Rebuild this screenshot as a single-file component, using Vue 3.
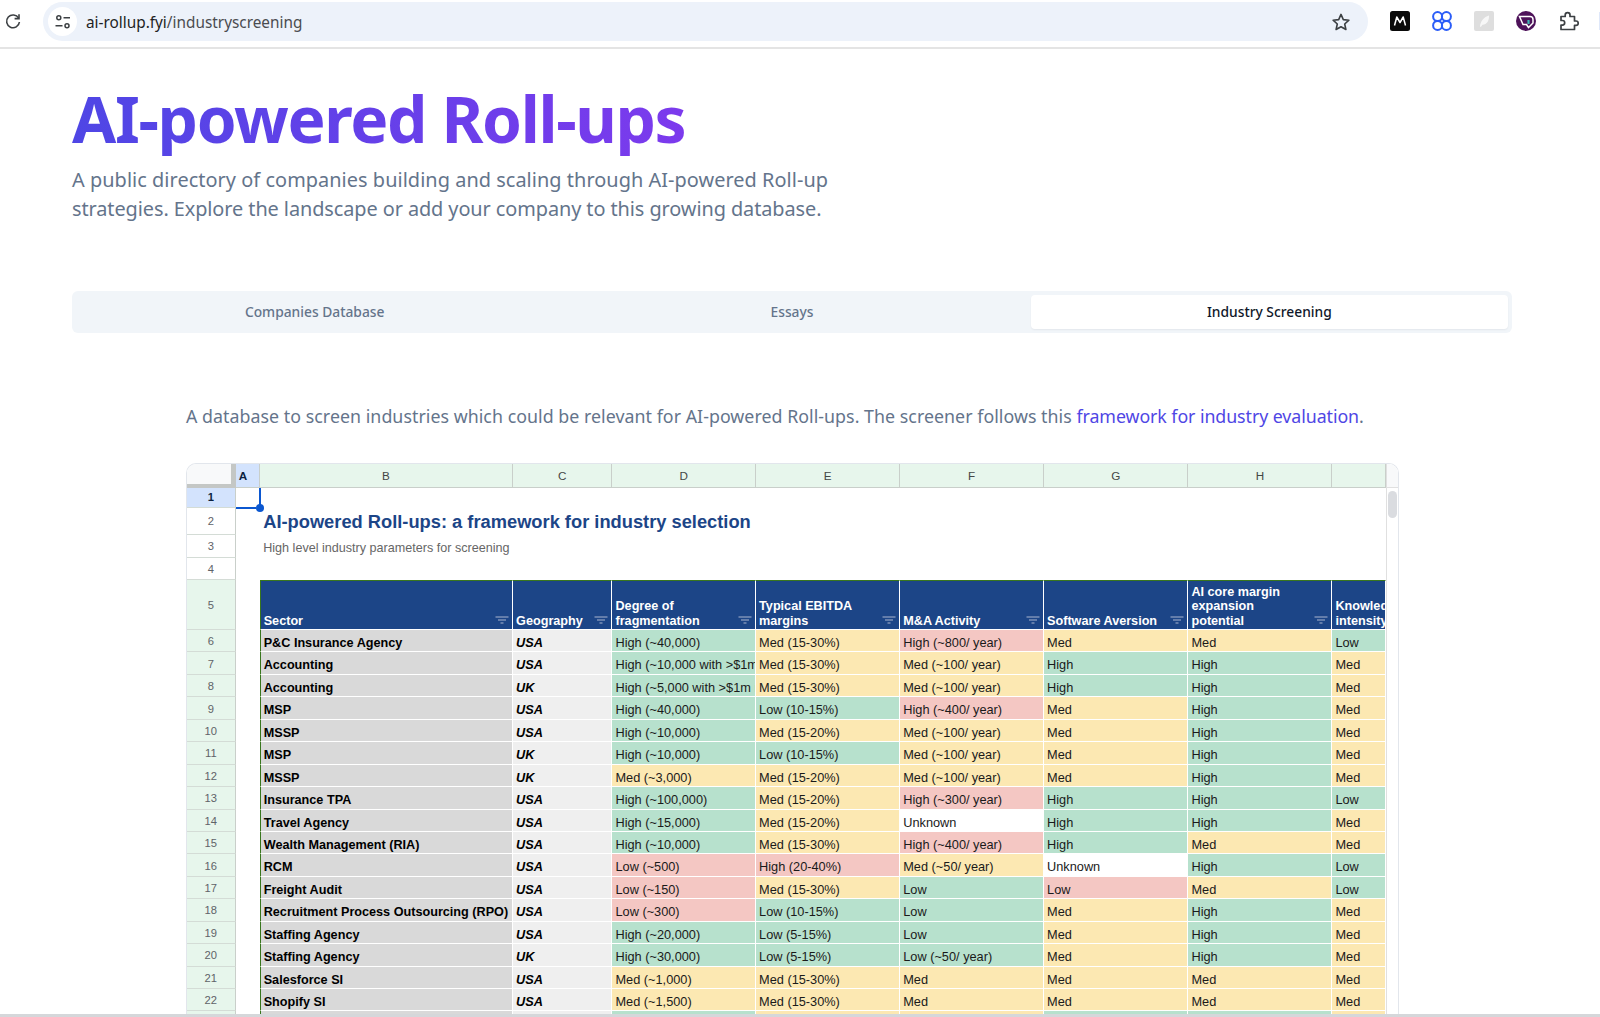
<script setup>
const colHeads = [
  { l: 'A', sel: true }, { l: 'B' }, { l: 'C' }, { l: 'D' }, { l: 'E' }, { l: 'F' }, { l: 'G' }, { l: 'H' }, { l: '' }
]
const heads = [
  { t: 'Sector', f: true }, { t: 'Geography', f: true },
  { t: 'Degree of\nfragmentation', f: true }, { t: 'Typical EBITDA\nmargins', f: true },
  { t: 'M&A Activity', f: true }, { t: 'Software Aversion', f: true },
  { t: 'AI core margin\nexpansion\npotential', f: true }, { t: 'Knowledge\nintensity', f: false }
]
const raw = [
  ['P&C Insurance Agency', 'USA', 'High (~40,000)|g', 'Med (15-30%)|y', 'High (~800/ year)|r', 'Med|y', 'Med|y', 'Low|g'],
  ['Accounting', 'USA', 'High (~10,000 with >$1m revenue)|g', 'Med (15-30%)|y', 'Med (~100/ year)|y', 'High|g', 'High|g', 'Med|y'],
  ['Accounting', 'UK', 'High (~5,000 with >$1m revenue)|g', 'Med (15-30%)|y', 'Med (~100/ year)|y', 'High|g', 'High|g', 'Med|y'],
  ['MSP', 'USA', 'High (~40,000)|g', 'Low (10-15%)|g', 'High (~400/ year)|r', 'Med|y', 'High|g', 'Med|y'],
  ['MSSP', 'USA', 'High (~10,000)|g', 'Med (15-20%)|y', 'Med (~100/ year)|y', 'Med|y', 'High|g', 'Med|y'],
  ['MSP', 'UK', 'High (~10,000)|g', 'Low (10-15%)|g', 'Med (~100/ year)|y', 'Med|y', 'High|g', 'Med|y'],
  ['MSSP', 'UK', 'Med (~3,000)|y', 'Med (15-20%)|y', 'Med (~100/ year)|y', 'Med|y', 'High|g', 'Med|y'],
  ['Insurance TPA', 'USA', 'High (~100,000)|g', 'Med (15-20%)|y', 'High (~300/ year)|r', 'High|g', 'High|g', 'Low|g'],
  ['Travel Agency', 'USA', 'High (~15,000)|g', 'Med (15-20%)|y', 'Unknown|w', 'High|g', 'High|g', 'Med|y'],
  ['Wealth Management (RIA)', 'USA', 'High (~10,000)|g', 'Med (15-30%)|y', 'High (~400/ year)|r', 'High|g', 'Med|y', 'Med|y'],
  ['RCM', 'USA', 'Low (~500)|r', 'High (20-40%)|r', 'Med (~50/ year)|y', 'Unknown|w', 'High|g', 'Low|g'],
  ['Freight Audit', 'USA', 'Low (~150)|r', 'Med (15-30%)|y', 'Low|g', 'Low|r', 'Med|y', 'Low|g'],
  ['Recruitment Process Outsourcing (RPO)', 'USA', 'Low (~300)|r', 'Low (10-15%)|g', 'Low|g', 'Med|y', 'High|g', 'Med|y'],
  ['Staffing Agency', 'USA', 'High (~20,000)|g', 'Low (5-15%)|g', 'Low|g', 'Med|y', 'High|g', 'Med|y'],
  ['Staffing Agency', 'UK', 'High (~30,000)|g', 'Low (5-15%)|g', 'Low (~50/ year)|g', 'Med|y', 'High|g', 'Med|y'],
  ['Salesforce SI', 'USA', 'Med (~1,000)|y', 'Med (15-30%)|y', 'Med|y', 'Med|y', 'Med|y', 'Med|y'],
  ['Shopify SI', 'USA', 'Med (~1,500)|y', 'Med (15-30%)|y', 'Med|y', 'Med|y', 'Med|y', 'Med|y'],
  ['', '', '|g', '|y', '|y', '|g', '|g', '|y']
]
const rows = raw.map((r, i) => ({
  n: i + 6,
  sector: r[0],
  geo: r[1],
  cells: r.slice(2).map(c => {
    const [t, k] = c.split('|')
    return { t, k }
  })
}))
</script>

<template>
  <div class="page">
    <header class="bar">
      <svg class="reload" width="18" height="18" viewBox="0 0 18 18" fill="none" stroke="#3c4043" stroke-width="1.6">
        <path d="M14.6 6.2A6.4 6.4 0 1 0 15.4 10" />
        <path d="M15 2.2v4.4h-4.4" stroke-linejoin="miter" />
      </svg>
      <div class="pill">
        <span class="tune">
          <svg width="18" height="18" viewBox="0 0 18 18" fill="none" stroke="#3c4043" stroke-width="1.5">
            <circle cx="4.8" cy="4.8" r="2" />
            <path d="M9.5 4.8h6.5M1.5 12.8h7" />
            <circle cx="13" cy="12.8" r="2" />
          </svg>
        </span>
        <span class="url">ai-rollup.fyi<span class="path">/industryscreening</span></span>
        <svg class="star" width="20" height="20" viewBox="0 0 20 20" fill="none" stroke="#3c4043" stroke-width="1.6" stroke-linejoin="round">
          <path d="M10 2.4l2.3 5.2 5.6.6-4.2 3.8 1.2 5.5L10 14.7l-4.9 2.8 1.2-5.5-4.2-3.8 5.6-.6z" />
        </svg>
      </div>
      <div class="exts">
        <svg width="20" height="20" viewBox="0 0 20 20">
          <rect width="20" height="20" rx="2.5" fill="#0a0a0a" />
          <path d="M4.5 14.5 6.8 6 10 11.5 13.2 6 15.5 14.5" fill="none" stroke="#fff" stroke-width="1.5" stroke-linejoin="round" />
        </svg>
        <svg width="20" height="20" viewBox="0 0 20 20" fill="none" stroke="#2a5cf8" stroke-width="2">
          <circle cx="5.6" cy="5.6" r="4.5" />
          <circle cx="14.4" cy="5.6" r="4.5" />
          <circle cx="5.6" cy="14.4" r="4.5" />
          <circle cx="14.4" cy="14.4" r="4.5" />
        </svg>
        <svg width="20" height="20" viewBox="0 0 20 20">
          <rect width="20" height="20" rx="2" fill="#dedede" />
          <path d="M6 15.5C6.5 10 10 6 15 4.5c.3 5-2 9-6.5 9.3L6.8 16z" fill="#f7f7f7" />
        </svg>
        <svg width="20" height="20" viewBox="0 0 20 20">
          <circle cx="10" cy="10" r="10" fill="#4d1259" />
          <path d="M3.5 5.5h10.5a3 3 0 0 1 3 3v3.5l-4.5 4.5-2-3H7z" fill="none" stroke="#fff" stroke-width="1.5" />
          <path d="M12.5 9v4" stroke="#3fb6b2" stroke-width="2.2" />
        </svg>
        <svg width="22" height="22" viewBox="0 0 22 22" fill="none" stroke="#3c4043" stroke-width="1.7" stroke-linejoin="round">
          <path d="M3 6.5h4.2V5a2.4 2.4 0 0 1 4.8 0v1.5h4.5V11H18a2.2 2.2 0 0 1 0 4.4h-1.5V19.5H3v-4.4h1.4a2.3 2.3 0 0 0 0-4.6H3z" />
        </svg>
        <span class="sliver"></span>
      </div>
    </header>

    <main class="content">
      <h1 class="title">AI-powered Roll-ups</h1>
      <p class="lead"><span class="l1">A public directory of companies building and scaling through AI-powered Roll-up</span><br /><span class="l2">strategies. Explore the landscape or add your company to this growing database.</span></p>

      <nav class="tabs">
        <div class="tab">Companies Database</div>
        <div class="tab">Essays</div>
        <div class="tab active">Industry Screening</div>
      </nav>

      <section class="screen">
        <p class="desc">A database to screen industries which could be relevant for AI-powered Roll-ups. The screener follows this <a class="link">framework for industry evaluation</a>.</p>

        <div class="sheet">
          <div class="grid">
            <div class="corner"></div>
            <div v-for="(c, i) in colHeads" :key="i" class="col" :class="{ sel: c.sel }">{{ c.l }}</div>

            <div class="rn sel">1</div>
            <div class="a1"><i class="sel-v"></i><i class="sel-h"></i><i class="sel-dot"></i></div>
            <div class="blank wide"></div>

            <div class="rn plain">2</div>
            <div class="blank"></div>
            <div class="blank wide sheet-title">AI-powered Roll-ups: a framework for industry selection</div>

            <div class="rn plain">3</div>
            <div class="blank"></div>
            <div class="blank wide sheet-sub">High level industry parameters for screening</div>

            <div class="rn plain">4</div>
            <div class="blank"></div>
            <div class="blank wide"></div>

            <div class="rn">5</div>
            <div class="blank"></div>
            <div v-for="(h, i) in heads" :key="h.t" class="head" :class="{ first: i === 0 }">
              <span class="head-t">{{ h.t }}</span>
              <svg v-if="h.f" class="filter" width="14" height="8" viewBox="0 0 14 8" fill="none" stroke="#a9b6d0" stroke-width="1.1">
                <path d="M0.5 1h13M3 4h8M5.5 7h3" />
              </svg>
            </div>

            <template v-for="r in rows" :key="r.n">
              <div class="rn data">{{ r.n }}</div>
              <div class="blank"></div>
              <div class="cell sector">{{ r.sector }}</div>
              <div class="cell geo">{{ r.geo }}</div>
              <div v-for="(c, i) in r.cells" :key="i" class="cell" :class="c.k">{{ c.t }}</div>
            </template>
          </div>
          <div class="scroll">
            <div class="scroll-top"></div>
            <div class="thumb"></div>
          </div>
        </div>
      </section>
    </main>
    <div class="foot"></div>
  </div>
</template>

<style>
html, body { margin: 0; background: #fff; }
</style>

<style scoped>
.page {
  height: 1017px;
  width: 1600px;
  display: flex;
  flex-direction: column;
  overflow: hidden;
  background: #fff;
}
.bar {
  height: 47px;
  flex: none;
  display: flex;
  align-items: flex-start;
  box-sizing: content-box;
  border-bottom: 2px solid #e4e4e4;
}
.reload { margin: 12px 0 0 4px; flex: none; }
.pill {
  margin: 2px 0 0 21px;
  width: 1325px;
  height: 39px;
  border-radius: 20px;
  background: #edf2fa;
  display: flex;
  align-items: center;
  flex: none;
}
.tune {
  width: 29px;
  height: 29px;
  margin-left: 5px;
  border-radius: 50%;
  background: #fff;
  display: flex;
  align-items: center;
  justify-content: center;
}
.url {
  margin-left: 9px;
  padding-top: 1px;
  font: 400 15.35px "Noto Sans", sans-serif;
  color: #1f1f1f;
}
.url .path { color: #4a4c50; }
.star { margin-left: auto; margin-right: 17px; }
.exts {
  display: flex;
  align-items: center;
  gap: 22px;
  margin: 11px 0 0 22px;
  height: 20px;
  flex: none;
}
.exts svg { flex: none; }
.sliver { width: 4px; height: 18px; background: #dfe8fa; margin-left: -3px; }

.content {
  flex: 1;
  min-height: 0;
  display: flex;
  flex-direction: column;
  padding: 0 88px 0 72px;
  font-family: "Noto Sans", sans-serif;
}
.title {
  margin: 33px 0 0;
  font-size: 64px;
  letter-spacing: -1.36px;
  line-height: 74px;
  font-weight: 700;
  width: fit-content;
  background: linear-gradient(90deg, #4f46e5, #7c3aed);
  -webkit-background-clip: text;
  background-clip: text;
  color: transparent;
}
.lead {
  margin: 9px 0 0;
  font-size: 19.9px;
  line-height: 29px;
  color: #64748b;
}
.l1 { letter-spacing: .05px; }
.l2 { letter-spacing: -.08px; }
.tabs {
  margin-top: 68px;
  height: 42px;
  padding: 4px;
  box-sizing: border-box;
  border-radius: 6px;
  background: #f1f5f9;
  display: grid;
  grid-template-columns: repeat(3, 1fr);
}
.tab {
  display: flex;
  align-items: center;
  justify-content: center;
  font-size: 13.8px;
  font-weight: 500;
  color: #64748b;
  border-radius: 4px;
  padding-bottom: 2px;
}
.tab.active {
  background: #fff;
  color: #0f172a;
  box-shadow: 0 1px 2px rgba(15, 23, 42, .06);
}
.screen {
  flex: 1;
  min-height: 0;
  display: flex;
  flex-direction: column;
  padding-left: 114px;
}
.desc {
  margin: 69px 0 0;
  font-size: 17.8px;
  letter-spacing: .04px;
  line-height: 28px;
  color: #64748b;
  white-space: nowrap;
}
.link { color: #4f46e5; letter-spacing: -.07px; }
.sheet {
  margin-top: 33px;
  width: 1213px;
  flex: 1;
  min-height: 0;
  overflow: hidden;
  display: flex;
  box-sizing: border-box;
  border: 1px solid #e2e6ec;
  border-bottom: 0;
  border-radius: 10px 10px 0 0;
  font-family: "Liberation Sans", Arial, sans-serif;
}
.grid {
  flex: none;
  display: grid;
  grid-template-columns: 48.7px 24px 253.4px 99.4px 143.6px 144.2px 143.8px 144.4px 144px 53.2px;
  grid-template-rows: 24px 20px 27px 23px 22px 50px repeat(18, 22.45px);
  align-content: start;
}
.corner {
  background: #f8f9fa;
  box-sizing: border-box;
  border-right: 5px solid #c4c7c5;
  border-bottom: 4px solid #c4c7c5;
}
.col {
  background: #e7f6ec;
  color: #444746;
  font-size: 11.7px;
  display: flex;
  align-items: center;
  justify-content: center;
  box-sizing: border-box;
  border-right: 1px solid #c9cfca;
  border-bottom: 1px solid #c9cfca;
}
.col.sel {
  background: #d3e3fd;
  color: #0b1f3f;
  font-weight: 700;
  justify-content: flex-start;
  padding-left: 3px;
}
.rn {
  background: #e7f6ec;
  color: #5f6368;
  font-size: 11.2px;
  display: flex;
  align-items: center;
  justify-content: center;
  box-sizing: border-box;
  border-right: 1px solid #c9cfca;
  border-bottom: 1px solid #d4dcd6;
}
.rn.data { padding-top: 1px; }
.rn.plain { background: #fff; }
.rn.sel { background: #d3e3fd; color: #0b1f3f; font-weight: 700; padding-bottom: 2px; }
.blank { background: #fff; min-width: 0; }
.wide { grid-column: 3 / -1; padding-left: 3.5px; white-space: nowrap; display: flex; align-items: center; }
.a1 { position: relative; background: #fff; }
.sel-v { position: absolute; right: -1px; top: 0; width: 2px; height: 20px; background: #0b57d0; }
.sel-h { position: absolute; left: 0; bottom: -1px; width: 20px; height: 2px; background: #0b57d0; }
.sel-dot { position: absolute; right: -4px; bottom: -4px; width: 8px; height: 8px; border-radius: 50%; background: #0b57d0; }
.sheet-title { font-size: 18.3px; font-weight: 700; color: #1c4587; }
.sheet-sub { font-size: 12.6px; color: #666; padding-top: 2px; }
.head {
  background: #1c4587;
  color: #fff;
  font-size: 12.65px;
  font-weight: 700;
  line-height: 14.3px;
  border-top: 1px solid #38761d;
  border-right: 1.5px solid #fff;
  border-bottom: 1.5px solid #fff;
  box-sizing: border-box;
  padding: 0 3px 1px 3px;
  display: flex;
  align-items: flex-end;
  justify-content: space-between;
  overflow: hidden;
  min-width: 0;
}
.head.first { border-left: 1px solid #38761d; }
.head-t { white-space: pre; }
.filter { flex: none; margin-bottom: 4px; margin-left: 2px; }
.cell {
  font-size: 12.75px;
  line-height: 21px;
  color: #1a1a1a;
  padding: 2px 0 0 3px;
  box-sizing: border-box;
  border-right: 1px solid #fff;
  border-bottom: 1px solid #fff;
  white-space: nowrap;
  overflow: hidden;
  min-width: 0;
}
.sector { background: #d9d9d9; font-size: 12.65px; font-weight: 700; color: #000; border-left: 1px solid #38761d; padding: 3px 0 0 3px; }
.geo { background: #efefef; font-weight: 700; font-style: italic; color: #000; }
.g { background: #b7e1cd; }
.y { background: #fce8b2; }
.r { background: #f4c7c3; }
.w { background: #fff; }
.scroll {
  flex: 1;
  min-width: 0;
  box-sizing: border-box;
  border-left: 1px solid #e0e0e0;
  background: #fff;
}
.scroll-top { height: 24px; background: #f8f9fa; box-sizing: border-box; border-bottom: 1px solid #e0e0e0; }
.thumb { width: 9px; height: 27px; margin: 3px 0 0 1px; border-radius: 5px; background: #dadce0; }
.foot { height: 3px; flex: none; background: #d5d7da; }
</style>
